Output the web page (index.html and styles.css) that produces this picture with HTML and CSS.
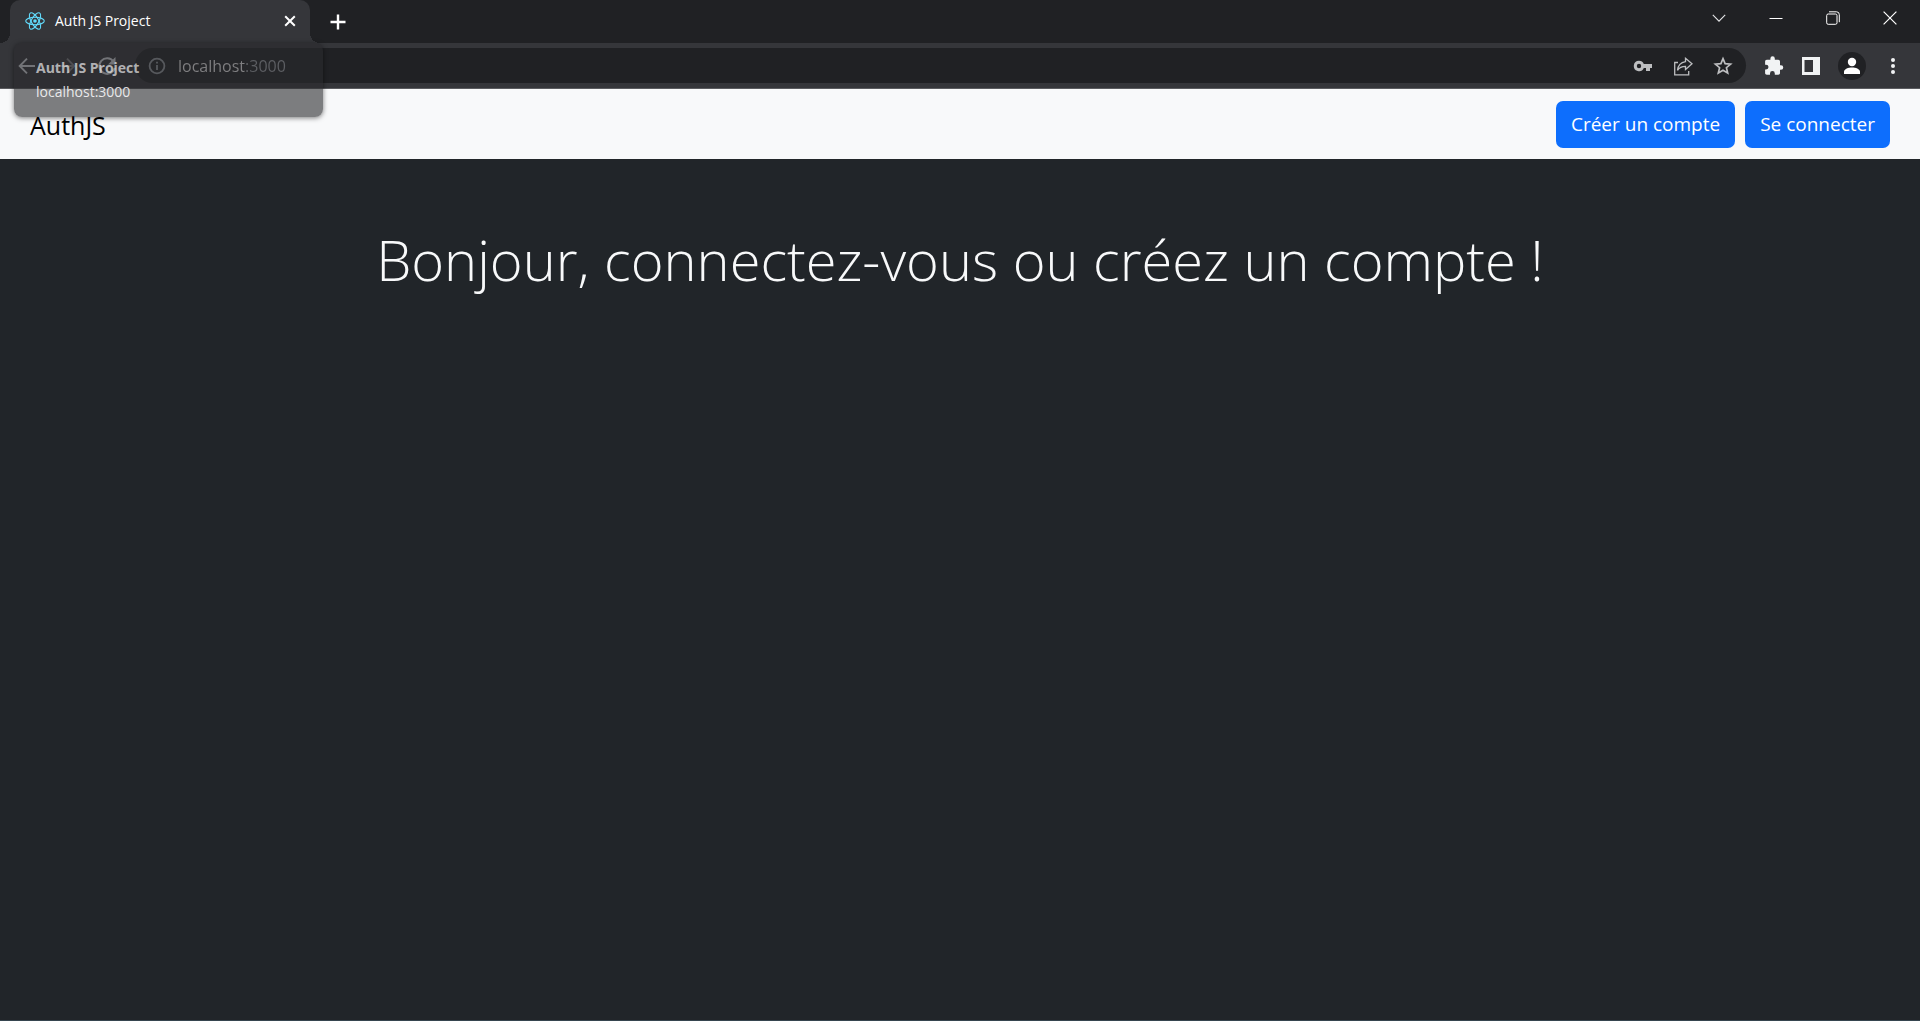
FILE: index.html
```html
<!DOCTYPE html>
<html lang="fr">
<head>
<meta charset="utf-8">
<meta name="viewport" content="width=device-width, initial-scale=1">
<title>Auth JS Project</title>
<link rel="stylesheet" href="styles.css">
</head>
<body>
<header class="browser">
  <div class="tabstrip">
    <div class="tab">
      <svg class="tab-logo" width="20" height="20" viewBox="0 0 20 20" fill="none" stroke="#61dafb" stroke-width="1.1" aria-hidden="true">
        <ellipse cx="10" cy="10" rx="9.3" ry="3.7"/>
        <ellipse cx="10" cy="10" rx="9.3" ry="3.7" transform="rotate(60 10 10)"/>
        <ellipse cx="10" cy="10" rx="9.3" ry="3.7" transform="rotate(120 10 10)"/>
        <circle cx="10" cy="10" r="1.8" fill="#61dafb" stroke="none"/>
      </svg>
      <span class="tab-title">Auth JS Project</span>
      <button class="icon-button" type="button" aria-label="Fermer l'onglet">
        <svg width="20" height="20" viewBox="0 0 20 20" stroke="#fff" stroke-width="2"><path d="M5.2 5.2l9.6 9.6M14.8 5.2l-9.6 9.6"/></svg>
      </button>
      <div class="tooltip" role="tooltip">
        <strong class="tooltip-title">Auth JS Project</strong>
        <span class="tooltip-url">localhost:3000</span>
      </div>
    </div>
    <button class="icon-button new-tab" type="button" aria-label="Nouvel onglet">
      <svg width="20" height="20" viewBox="0 0 20 20" stroke="#fff" stroke-width="2.4"><path d="M10 2.500v15M2.500 10h15"/></svg>
    </button>
    <div class="window-controls">
      <button class="window-button" type="button" aria-label="Rechercher dans les onglets">
        <svg width="14" height="14" viewBox="0 0 14 14" fill="none" stroke="#e4e5e7" stroke-width="1.1"><path d="M.8 3.800L7 10.200l6.200-6.400"/></svg>
      </button>
      <button class="window-button" type="button" aria-label="Réduire">
        <svg width="14" height="14" viewBox="0 0 14 14" stroke="#fff"><path d="M.5 7.500h13"/></svg>
      </button>
      <button class="window-button" type="button" aria-label="Restaurer">
        <svg width="14" height="14" viewBox="0 0 14 14" fill="none" stroke="#fff" stroke-width="1"><rect x=".7" y="3" width="10.300" height="10.300" rx="1.500"/><path d="M3 .8h7.500a2.800 2.800 0 0 1 2.800 2.800v7.600"/></svg>
      </button>
      <button class="window-button" type="button" aria-label="Fermer">
        <svg width="14" height="14" viewBox="0 0 14 14" stroke="#fff" stroke-width="1.200"><path d="M.6 .6l12.800 12.800M13.400 .6L.6 13.400"/></svg>
      </button>
    </div>
  </div>
  <div class="toolbar">
    <div class="nav-buttons">
      <button class="icon-button" type="button" aria-label="Précédent">
        <svg width="20" height="20" viewBox="0 0 20 20" fill="none" stroke="#dee1e6" stroke-width="1.900"><path d="M18 10H3M10 2.700L2.700 10l7.300 7.300"/></svg>
      </button>
      <button class="icon-button" type="button" aria-label="Suivant">
        <svg width="20" height="20" viewBox="0 0 20 20" fill="none" stroke="#85868a" stroke-width="1.900"><path d="M2 10h15M10 2.700l7.300 7.300-7.300 7.300"/></svg>
      </button>
      <button class="icon-button" type="button" aria-label="Actualiser">
        <svg width="20" height="20" viewBox="0 0 20 20" fill="none" stroke="#dee1e6" stroke-width="2"><path d="M16.500 5.500A7.800 7.800 0 1 0 17.700 12"/><path d="M18.500 1v7.500H11z" fill="#dee1e6" stroke="none"/></svg>
      </button>
    </div>
    <div class="omnibox">
      <svg width="18" height="18" viewBox="0 0 18 18" fill="none" stroke="#9aa0a6" stroke-width="1.800" aria-hidden="true"><circle cx="9" cy="9" r="7.400"/><path d="M9 8v5M9 4.800v1.800"/></svg>
      <input class="address" type="text" value="localhost:3000" aria-label="Adresse">
      <div class="omnibox-actions">
        <button class="icon-button" type="button" aria-label="Mots de passe">
          <svg width="20" height="20" viewBox="0 0 20 20" fill="#bdbec0"><path fill-rule="evenodd" d="M6 4.800a5.200 5.200 0 1 0 4.800 7.200H13v3h4v-3h2V8h-8.200A5.200 5.200 0 0 0 6 4.800zm0 3a2.200 2.200 0 1 1 0 4.400 2.200 2.200 0 0 1 0-4.400z"/></svg>
        </button>
        <button class="icon-button" type="button" aria-label="Partager">
          <svg width="20" height="20" viewBox="0 0 20 20" fill="none" stroke="#bdbec0" stroke-width="1.300"><path d="M5 6.500H1.700v12.300h14V15"/><path d="M12.500 2.300L19 7.800l-6.500 5.700v-3.200c-3.800 0-6.300 1.200-8 4 .5-4.800 3.500-8 8-8.700z"/></svg>
        </button>
        <button class="icon-button" type="button" aria-label="Ajouter aux favoris">
          <svg width="20" height="20" viewBox="0 0 20 20" fill="none" stroke="#bdbec0" stroke-width="1.700"><path d="M10 2.600l2.100 5 5.500.5-4.200 3.600 1.300 5.400L10 14.300l-4.700 2.800 1.300-5.400-4.200-3.600 5.500-.5z"/></svg>
        </button>
      </div>
    </div>
    <div class="browser-actions">
      <button class="icon-button" type="button" aria-label="Extensions">
        <svg width="20" height="20" viewBox="0 0 20 20" fill="#f1f3f4"><path d="M17 9.300h-1V5.500c0-1-.8-1.700-1.700-1.700h-3.500V2.500a2.200 2.200 0 0 0-4.400 0v1.300H2.800c-1 0-1.700.7-1.700 1.700v3.200h1a2.400 2.400 0 0 1 0 4.800h-1v3.500c0 1 .7 1.700 1.700 1.700H6v-1.300a2.400 2.400 0 0 1 4.800 0v1.300h3.500c1 0 1.700-.7 1.700-1.700v-3.200h1a2.250 2.250 0 0 0 0-4.500z"/></svg>
      </button>
      <button class="icon-button" type="button" aria-label="Panneau latéral">
        <svg width="20" height="20" viewBox="0 0 20 20" fill="#f1f3f4"><path fill-rule="evenodd" d="M1 1h18v18H1zm2.500 3v12H12V4z"/></svg>
      </button>
      <button class="icon-button avatar" type="button" aria-label="Profil">
        <svg width="20" height="20" viewBox="0 0 20 20" fill="#fff"><circle cx="10" cy="6" r="4.200"/><path d="M2 18v-2.200c0-2.900 4.500-4.300 8-4.300s8 1.400 8 4.300V18z"/></svg>
      </button>
      <button class="icon-button" type="button" aria-label="Menu">
        <svg width="20" height="20" viewBox="0 0 20 20" fill="#f1f3f4"><circle cx="10" cy="4" r="2"/><circle cx="10" cy="10" r="2"/><circle cx="10" cy="16" r="2"/></svg>
      </button>
    </div>
  </div>
</header>
<nav class="navbar">
  <a class="brand" href="#">AuthJS</a>
  <div class="navbar-actions">
    <button class="btn" type="button">Créer un compte</button>
    <button class="btn" type="button">Se connecter</button>
  </div>
</nav>
<main class="home">
  <h1 class="greeting">Bonjour, connectez-vous ou créez un compte !</h1>
</main>
</body>
</html>
```
FILE: styles.css
```css
* {
  box-sizing: border-box;
}

body {
  display: flex;
  flex-direction: column;
  min-height: 100vh;
  margin: 0;
  background: #212529;
  font-family: "Open Sans", "Noto Sans", sans-serif;
}

button,
input {
  border: 0;
  font-family: inherit;
}

svg {
  display: block;
  flex: none;
}

.icon-button {
  display: grid;
  place-items: center;
  flex: none;
  width: 20px;
  height: 20px;
  padding: 0;
  border-radius: 50%;
  background: transparent;
}

/* Browser window */
.tabstrip {
  display: flex;
  align-items: center;
  height: 43px;
  padding: 0 2px 0 10px;
  background: #202124;
}

.tab {
  position: relative;
  display: flex;
  align-items: center;
  gap: 10px;
  width: 300px;
  height: 43px;
  padding: 0 10px 2px 15px;
  border-radius: 10px 10px 0 0;
  background: #35363a;
  color: #fff;
}

.tab::before,
.tab::after {
  content: "";
  position: absolute;
  bottom: 0;
  width: 10px;
  height: 10px;
}

.tab::before {
  right: 100%;
  background: radial-gradient(circle at 0 0, #202124 10px, #35363a 10px);
}

.tab::after {
  left: 100%;
  background: radial-gradient(circle at 100% 0, #202124 10px, #35363a 10px);
}

.tab-title {
  flex: 1;
  font-size: 14px;
  line-height: 20px;
}

.new-tab {
  margin-left: 18px;
}

.window-controls {
  display: flex;
  align-self: flex-start;
  margin-left: auto;
}

.window-button {
  display: grid;
  place-items: center;
  width: 57px;
  height: 36px;
  padding: 0;
  background: transparent;
}

.toolbar {
  display: flex;
  align-items: center;
  height: 46px;
  padding: 0 17px;
  border-bottom: 1px solid #5b5c60;
  background: #35363a;
}

.nav-buttons {
  display: flex;
  gap: 20px;
  margin-right: 18px;
}

.omnibox {
  display: flex;
  flex: 1;
  align-items: center;
  gap: 12px;
  height: 35px;
  padding: 0 13px;
  border-radius: 18px;
  background: #202124;
}

.address {
  flex: 1;
  min-width: 0;
  padding: 0;
  outline: 0;
  background: linear-gradient(90deg, #fff 67px, #a9aeb4 67px);
  background-clip: text;
  color: transparent;
  font-size: 16px;
  line-height: 24px;
}

.omnibox-actions {
  display: flex;
  gap: 20px;
}

.browser-actions {
  display: flex;
  align-items: center;
  gap: 17px;
  margin-left: 18px;
}

.avatar {
  width: 28px;
  height: 28px;
  background: #202124;
}

.tooltip {
  position: absolute;
  z-index: 1;
  top: 43px;
  left: 4px;
  display: grid;
  gap: 4px;
  width: 309px;
  padding: 15px 22px;
  border-radius: 8px;
  background: rgb(41 42 45 / 60%);
  box-shadow: 0 1px 5px rgb(0 0 0 / 50%);
  color: rgb(255 255 255 / 65%);
  font-size: 14px;
  line-height: 20px;
}

.tooltip-title {
  font-weight: 700;
}

.tooltip-url {
  color: rgb(255 255 255 / 85%);
}

/* Application */
.navbar {
  display: flex;
  align-items: center;
  justify-content: space-between;
  padding: 12px 30px 11px;
  background: #f8f9fa;
}

.brand {
  color: #000;
  font-size: 25px;
  line-height: 36px;
  text-decoration: none;
}

.navbar-actions {
  display: flex;
  gap: 10px;
}

.btn {
  padding: 8px 15px;
  border-radius: 7px;
  background: #0d6efd;
  color: #fff;
  font-size: 19px;
  line-height: 31px;
}

.home {
  flex: 1;
  padding: 60px 30px;
  border-bottom: 1px solid #36454f;
}

.greeting {
  margin: 0;
  color: #f8f9fa;
  font-size: 56px;
  font-weight: 300;
  line-height: 80px;
  text-align: center;
}
```
